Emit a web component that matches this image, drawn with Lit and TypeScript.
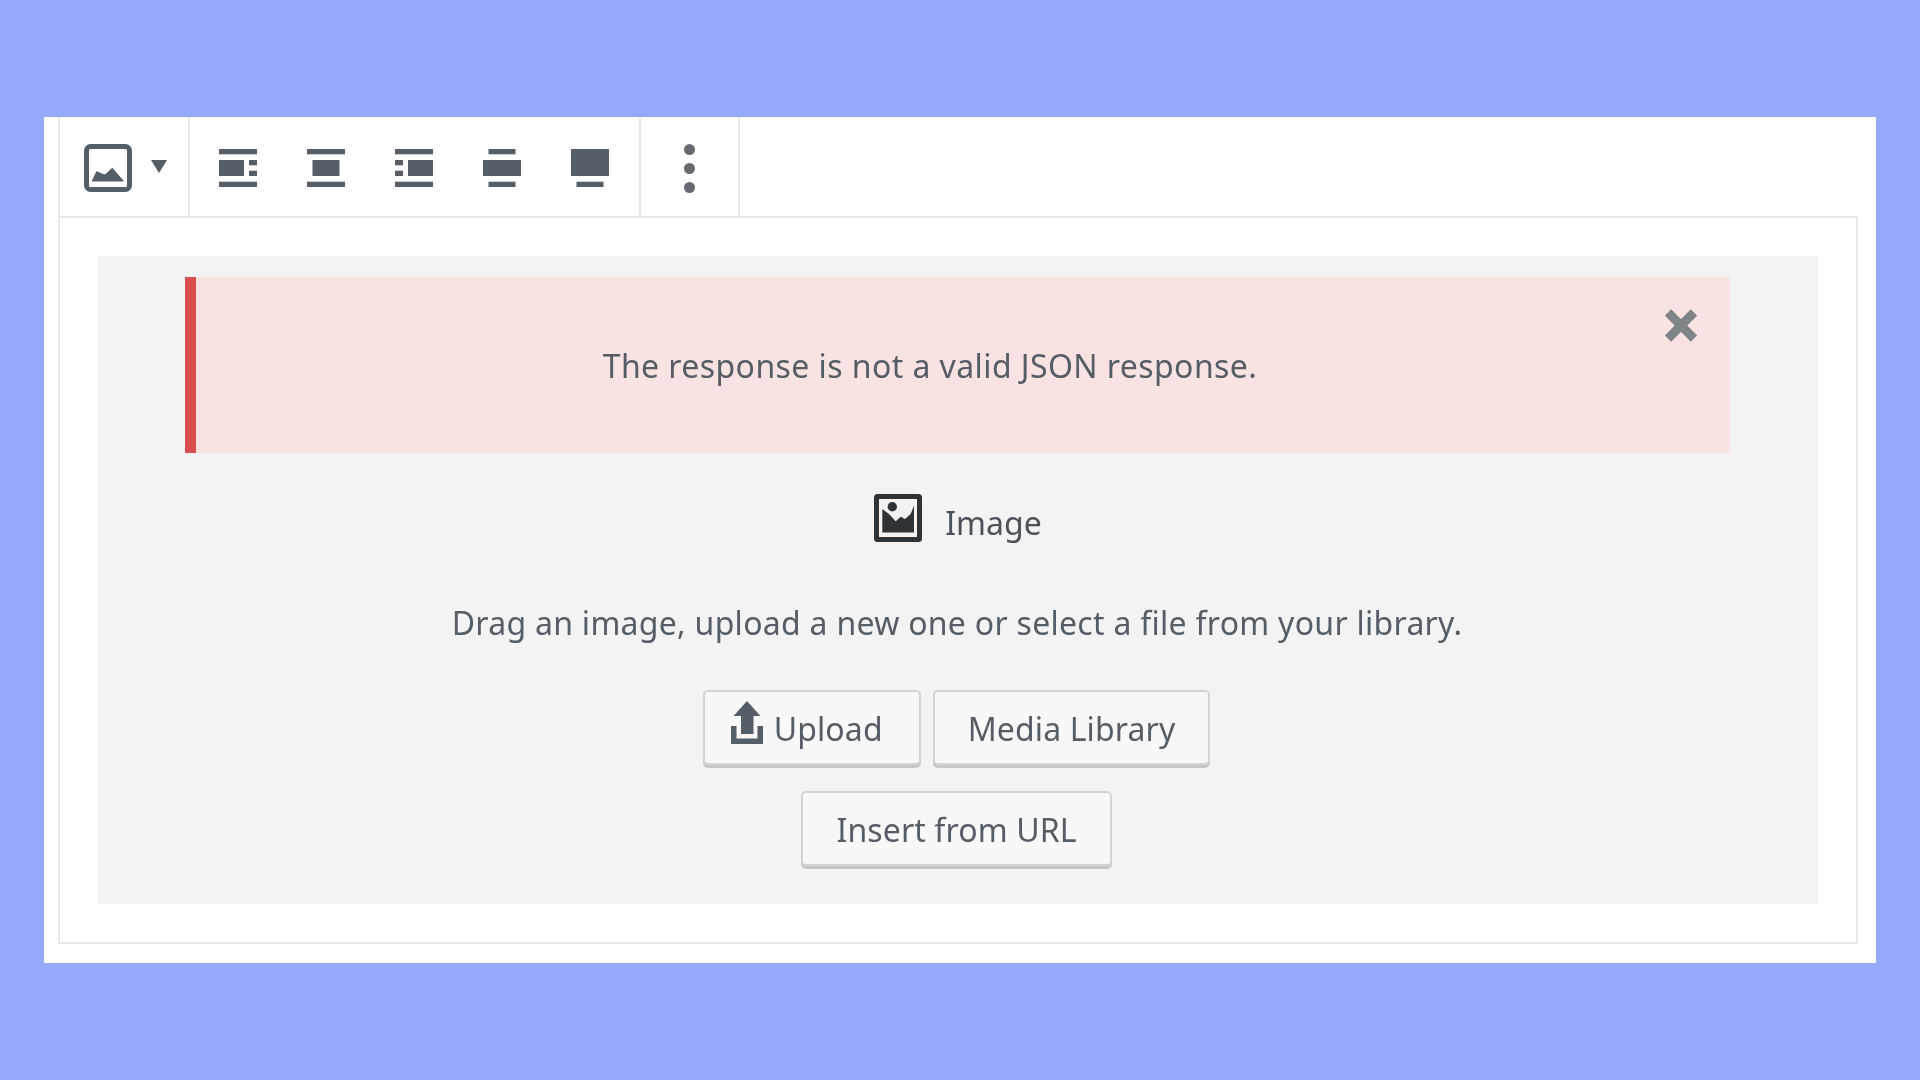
import { LitElement, html, css, svg } from "lit";
import { customElement } from "lit/decorators.js";

const alignIcons = [
  svg`<rect width="38" height="5.3" y="0"/><rect y="11" width="25" height="16"/><rect x="30" y="11" width="8" height="5.3"/><rect x="30" y="21.7" width="8" height="5.3"/><rect y="32.7" width="38" height="5.3"/>`,
  svg`<rect width="38" height="5.3"/><rect x="5.5" y="11" width="27" height="16"/><rect y="32.7" width="38" height="5.3"/>`,
  svg`<rect width="38" height="5.3"/><rect y="11" width="8" height="5.3"/><rect y="21.7" width="8" height="5.3"/><rect x="13" y="11" width="25" height="16"/><rect y="32.7" width="38" height="5.3"/>`,
  svg`<rect x="5.5" width="27" height="5.3"/><rect y="11" width="38" height="16"/><rect x="5.5" y="32.7" width="27" height="5.3"/>`,
  svg`<rect width="38" height="27"/><rect x="5.5" y="32.7" width="27" height="5.3"/>`,
];

@customElement("app-root")
export class AppRoot extends LitElement {
  static styles = css`
    :host {
      display: block;
      width: 1920px;
      height: 1080px;
      box-sizing: border-box;
      padding: 117px 44px 117px 44px;
      background: #95a8fa;
      font-family: "Noto Sans", "Open Sans", sans-serif;
      color: #555d66;
    }
    .panel {
      height: 846px;
      box-sizing: border-box;
      background: #fff;
      padding: 0 18px 19px 14px;
      display: flex;
      flex-direction: column;
      filter: blur(0.6px);
    }
    .toolbar { display: flex; height: 99px; flex: none; }
    .group {
      display: flex;
      align-items: center;
      box-sizing: border-box;
      padding-top: 3px;
      border-right: 2px solid #e6e8e9;
    }
    .g1 { width: 132px; border-left: 2px solid #e6e8e9; padding-left: 24px; }
    .g2 { width: 451px; padding-left: 4px; }
    .g3 { width: 99px; justify-content: center; }
    .tool { width: 88px; display: flex; justify-content: center; flex: none; }
    .tool svg { width: 38px; height: 38px; fill: #555d66; display: block; }
    .mainicon { width: 48px; height: 48px; display: block; flex: none; }
    .caret {
      width: 16px; height: 13px; margin-left: 19px; margin-top: -4px;
      fill: #555d66; display: block; flex: none;
    }
    .dots { width: 11px; height: 49px; fill: #666b70; display: block; }
    .block {
      flex: 1;
      border: 2px solid #e6e8e9;
      padding: 38px;
      display: flex;
      min-height: 0;
    }
    .placeholder {
      flex: 1;
      background: #f3f3f4;
      padding: 21px 0 0;
      display: flex;
      flex-direction: column;
      align-items: center;
    }
    .notice {
      position: relative;
      align-self: stretch;
      margin: 0 88px 0 87px;
      height: 176px;
      box-sizing: border-box;
      background: #f9e2e2;
      border-left: 11px solid #d94f4f;
      padding: 2px 66px 0 0;
      display: flex;
      align-items: center;
      justify-content: center;
      font-size: 32px;
      letter-spacing: 0.42px;
      line-height: 40px;
    }
    .close {
      position: absolute;
      right: 33px;
      top: 32px;
      width: 32px;
      height: 33px;
      stroke: #7f8488;
      stroke-width: 9px;
      display: block;
    }
    .title {
      display: flex;
      align-items: center;
      gap: 23px;
      margin-top: 40px;
      height: 49px;
      font-size: 32px;
      line-height: 49px;
      color: #4b5259;
    }
    .title span { padding-top: 10px; }
    .desc {
      margin-top: 60px;
      margin-right: 2px;
      font-size: 32px;
      letter-spacing: 0.28px;
      line-height: 42px;
      white-space: nowrap;
    }
    .row { display: flex; gap: 12px; justify-content: center; margin-right: 3px; }
    .r1 { margin-top: 46px; }
    .r2 { margin-top: 26px; }
    .btn {
      box-sizing: border-box;
      height: 75px;
      padding: 2px 33px 0;
      display: flex;
      align-items: center;
      font-size: 32px;
      letter-spacing: 0.12px;
      color: #555d66;
      background: #f8f8f8;
      border: 2px solid #d4d4d4;
      border-radius: 5px;
      box-shadow: 0 3px 0 #c9c6c7;
    }
    .upload { padding: 2px 36px 0 26px; }
    .upload svg { width: 32px; height: 43px; fill: #555d66; margin-right: 11px; margin-top: -12px; display: block; }
  `;

  render() {
    return html`
      <div class="panel">
        <div class="toolbar">
          <div class="group g1">
            <svg class="mainicon" viewBox="0 0 48 48">
              <rect x="2.500" y="2.500" width="43" height="43" rx="4" fill="none" stroke="#555d66" stroke-width="5"/>
              <path d="M8.300 37L12.700 27.700 19 30.500 21 31 28.300 24.300 39.300 37z" fill="#555d66" stroke="#555d66" stroke-width="1" stroke-linejoin="round"/>
            </svg>
            <svg class="caret" viewBox="0 0 16 13"><path d="M0 0h16L8 13z"/></svg>
          </div>
          <div class="group g2">
            ${alignIcons.map((i) => html`<div class="tool"><svg viewBox="0 0 38 38">${i}</svg></div>`)}
          </div>
          <div class="group g3">
            <svg class="dots" viewBox="0 0 11 49">
              <circle cx="5.500" cy="5.500" r="5.500"/><circle cx="5.500" cy="24.500" r="5.500"/><circle cx="5.500" cy="43.500" r="5.500"/>
            </svg>
          </div>
        </div>
        <div class="block">
          <div class="placeholder">
            <div class="notice">
              The response is not a valid JSON response.
              <svg class="close" viewBox="0 0 32 33"><path d="M3 3.500l26 26M29 3.500l-26 26"/></svg>
            </div>
            <div class="title">
              <svg class="mainicon" viewBox="0 0 48 48">
                <rect x="2.500" y="2.500" width="43" height="43" rx="1" fill="none" stroke="#2f3336" stroke-width="5"/>
                <circle cx="18.300" cy="12.700" r="4.700" fill="#2f3336"/>
                <path d="M8.300 38.500V15L15 20 21.700 27.300 26.700 22.700 31 25 36.700 20 40 11.700V38.500z" fill="#2f3336"/>
              </svg>
              <span>Image</span>
            </div>
            <div class="desc">Drag an image, upload a new one or select a file from your library.</div>
            <div class="row r1">
              <div class="btn upload">
                <svg viewBox="0 0 32 43">
                  <path d="M0 25h5.500v12.500h21V25H32v18H0zM16 0l13.500 15h-7v18H10V15H2.500z"/>
                </svg>
                Upload
              </div>
              <div class="btn">Media Library</div>
            </div>
            <div class="row r2"><div class="btn">Insert from URL</div></div>
          </div>
        </div>
      </div>
    `;
  }
}
